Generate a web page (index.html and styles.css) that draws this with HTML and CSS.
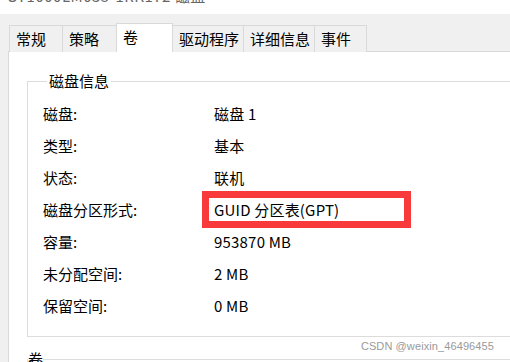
FILE: index.html
```html
<!DOCTYPE html>
<html lang="zh-CN">
<head>
<meta charset="utf-8">
<title>磁盘属性</title>
<link rel="stylesheet" href="styles.css">
</head>
<body>
<div class="titlebar"><span class="title-text">ST1000LM035-1RK172 磁盘</span></div>
<div class="tabs">
  <div class="tab w-general">常规</div>
  <div class="tab w-policy">策略</div>
  <div class="tab active w-volume">卷</div>
  <div class="tab w-driver">驱动程序</div>
  <div class="tab w-detail">详细信息</div>
  <div class="tab w-event">事件</div>
</div>
<div class="panel">
  <fieldset class="group">
    <legend class="group-title">磁盘信息</legend>
    <div class="row"><div class="label">磁盘:</div><div class="value">磁盘 1</div></div>
    <div class="row"><div class="label">类型:</div><div class="value">基本</div></div>
    <div class="row"><div class="label">状态:</div><div class="value">联机</div></div>
    <div class="row"><div class="label">磁盘分区形式:</div><div class="value hl">GUID 分区表(GPT)</div></div>
    <div class="row"><div class="label">容量:</div><div class="value">953870 MB</div></div>
    <div class="row"><div class="label">未分配空间:</div><div class="value">2 MB</div></div>
    <div class="row"><div class="label">保留空间:</div><div class="value">0 MB</div></div>
  </fieldset>
  <fieldset class="group group2">
    <legend class="group-title">卷</legend>
  </fieldset>
</div>
<div class="watermark">CSDN @weixin_46496455</div>
</body>
</html>
```
FILE: styles.css
```css
html, body {
  margin: 0;
  padding: 0;
}
body {
  width: 510px;
  height: 362px;
  overflow: hidden;
  background: #f0f0f0;
  font-family: "Noto Sans CJK SC", "Microsoft YaHei", sans-serif;
  font-size: 15px;
  color: #000;
  position: relative;
}
.titlebar {
  height: 14px;
  background: #fff;
  overflow: hidden;
  padding-left: 8px;
}
.title-text {
  display: block;
  margin-top: -14px;
  line-height: 20px;
  color: #666;
  font-size: 15px;
  letter-spacing: 0.5px;
}
.tabs {
  display: flex;
  align-items: flex-end;
  padding-left: 9px;
  height: 38px;
  box-sizing: border-box;
  padding-top: 10px;
  margin-bottom: -1px;
  position: relative;
  z-index: 1;
}
.tab {
  box-sizing: border-box;
  height: 27px;
  border: 1px solid #d9d9d9;
  border-bottom: none;
  margin-left: -1px;
  padding-left: 6px;
  line-height: 25px;
  background: #f0f0f0;
  white-space: nowrap;
}
.tab:first-child { margin-left: 0; }
.tab.active {
  height: 29px;
  background: #fff;
  line-height: 25px;
  padding-bottom: 2px;
}
.w-general { width: 54px; }
.w-policy { width: 55px; }
.w-volume { width: 57px; }
.w-driver { width: 72px; }
.w-detail { width: 72px; }
.w-event { width: 53px; }
.panel {
  margin-left: 8px;
  border-left: 1px solid #d9d9d9;
  border-top: 1px solid #d9d9d9;
  background: #fff;
  height: 311px;
  overflow: hidden;
  padding-top: 19px;
  padding-left: 18px;
  box-sizing: border-box;
}
.group {
  margin: 0;
  border: 1px solid #dcdcdc;
  border-right: none;
  padding: 6px 0 15px 15px;
  min-width: 0;
}
.group-title {
  margin-left: 4px;
  padding: 0 2px;
  line-height: 20px;
  font-size: 15px;
}
.row {
  display: flex;
  align-items: center;
  height: 32px;
}
.label {
  width: 171px;
  flex: none;
}
.value {
  white-space: nowrap;
  letter-spacing: 0.2px;
}
.hl {
  border: 7px solid #f93a3a;
  width: 190px;
  height: 23px;
  line-height: 23px;
  padding-left: 5px;
  margin-left: -12px;
  flex: none;
}
.group2 {
  margin-top: 12px;
  height: 30px;
  padding: 0;
}
.group2 .group-title {
  margin-left: 0;
  padding: 0;
}
.watermark {
  position: absolute;
  right: 16px;
  bottom: 10px;
  font-family: "Liberation Sans", Arial, sans-serif;
  font-size: 11px;
  color: #9a9a9a;
  letter-spacing: 0.1px;
}
```
